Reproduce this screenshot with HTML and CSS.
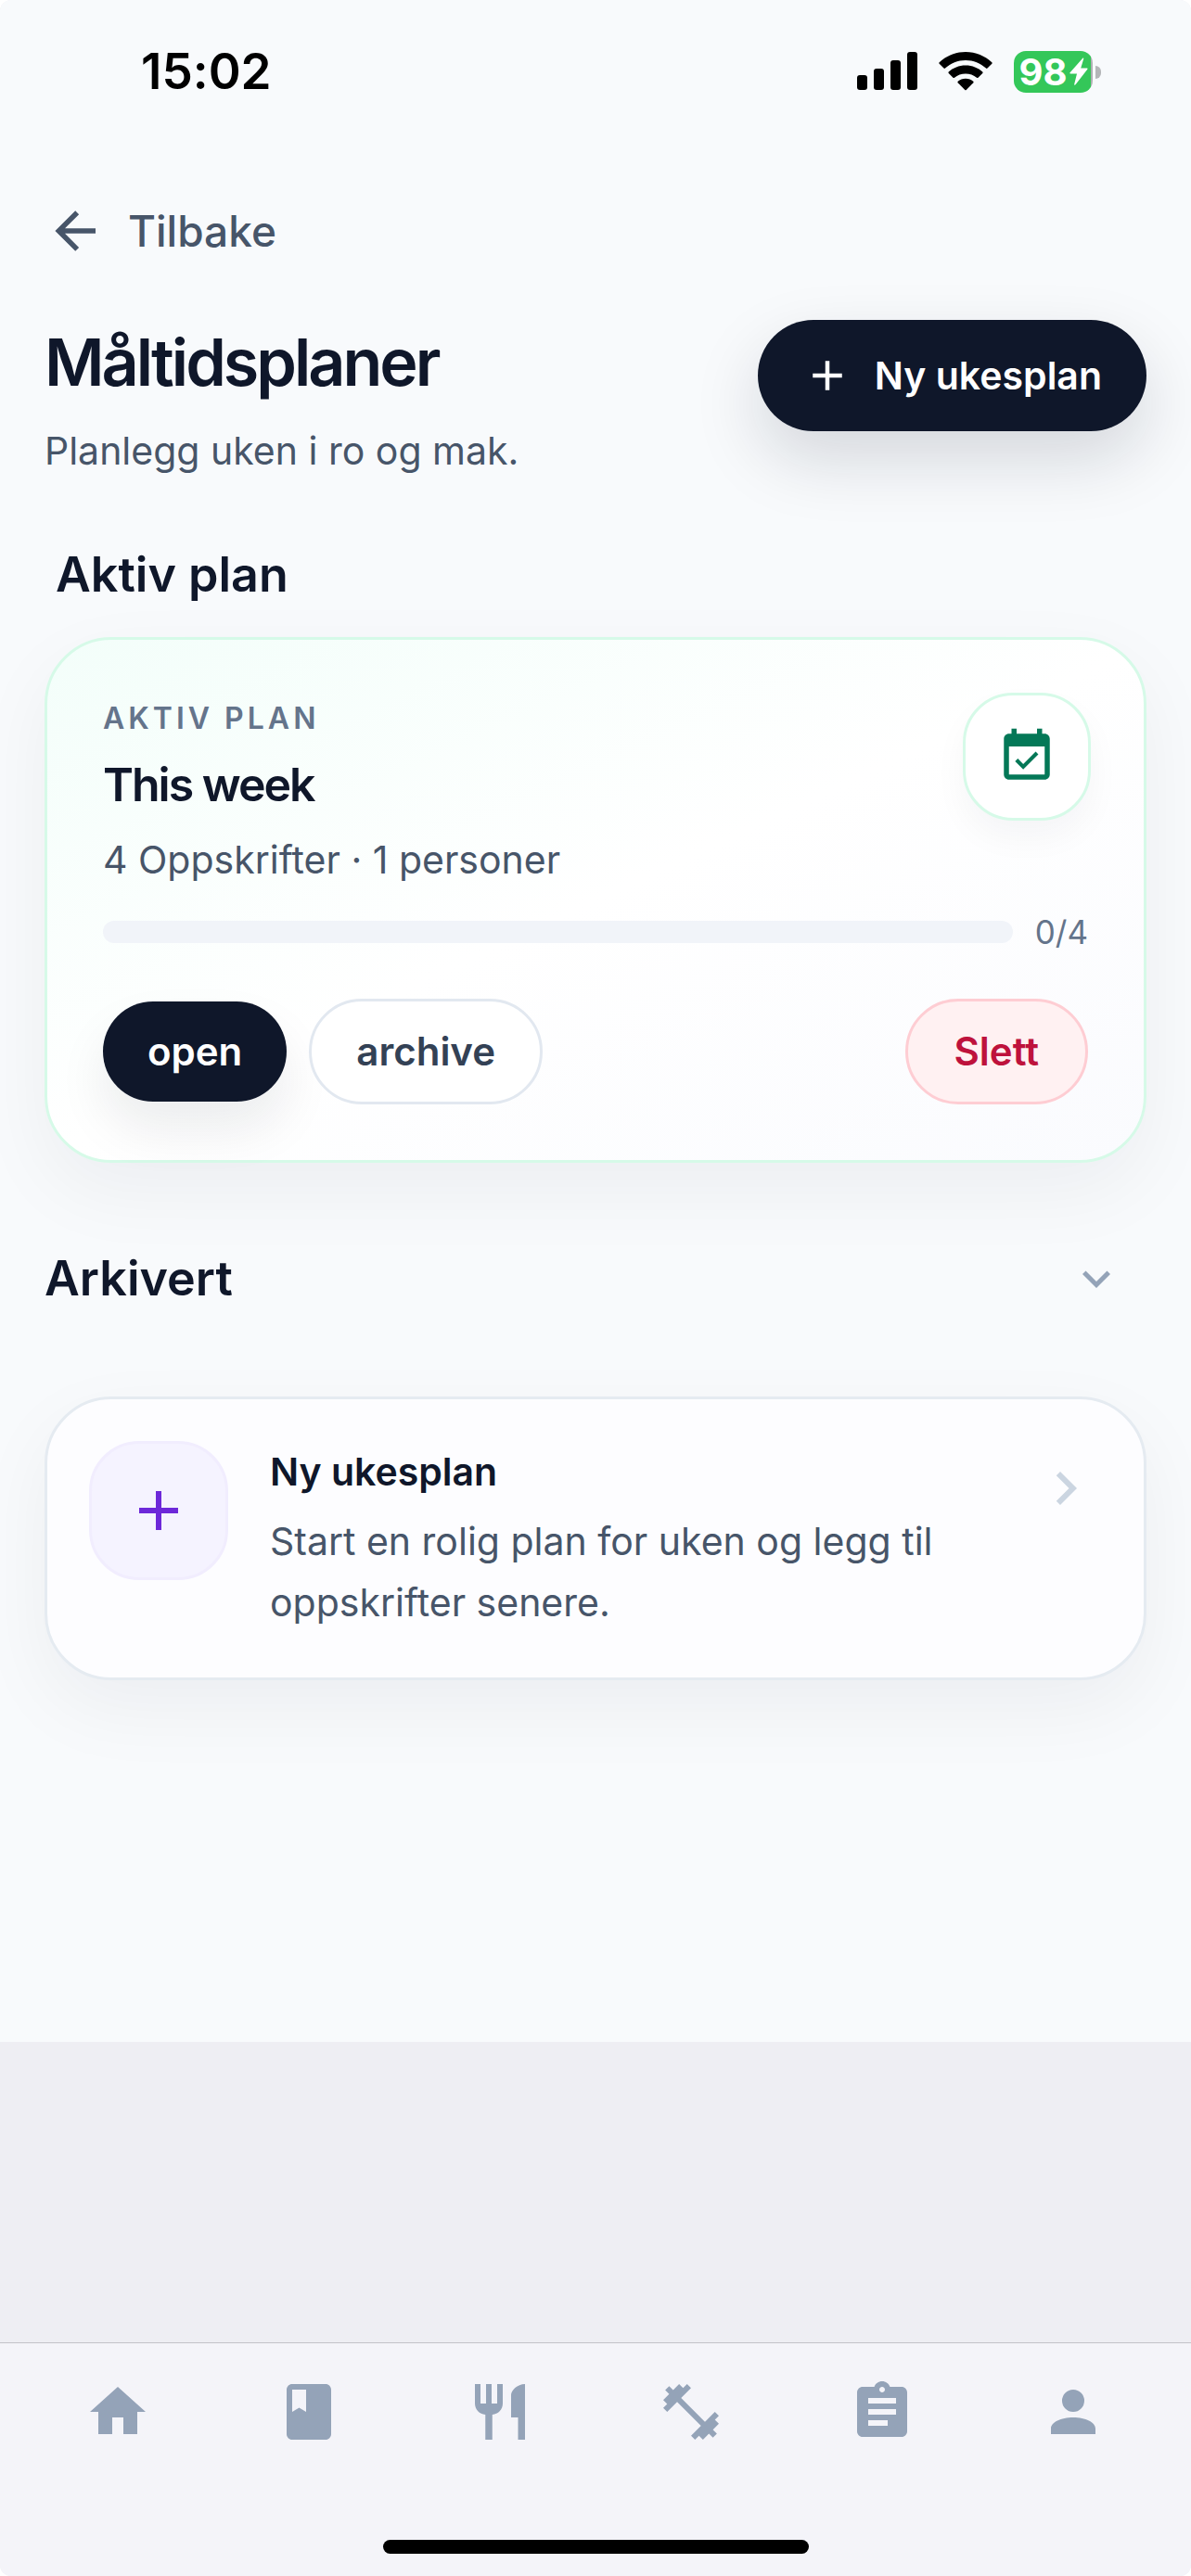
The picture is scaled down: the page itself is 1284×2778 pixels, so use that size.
FILE: index.html
```html
<!DOCTYPE html>
<html lang="nb">
<head>
<meta charset="utf-8">
<meta name="viewport" content="width=device-width, initial-scale=1">
<title>Måltidsplaner</title>
<link rel="stylesheet" href="styles.css">
</head>
<body>
<div class="screen">
  <div class="page">
    <header class="status-bar">
      <span class="status-time">15:02</span>
      <div class="status-icons">
        <svg class="signal" viewBox="0 0 65 42" aria-hidden="true">
          <rect x="0" y="25" width="11" height="16" rx="3"/>
          <rect x="18" y="18" width="11" height="23" rx="3"/>
          <rect x="36" y="9" width="11" height="32" rx="3"/>
          <rect x="54" y="0" width="11" height="41" rx="3"/>
        </svg>
        <svg class="wifi" viewBox="0 0 58 42" aria-hidden="true">
          <path d="M29 0C40 0 50 4.300 57.300 11.300Q58 12 57.300 12.800L52.500 17.600Q51.700 18.300 51 17.600C45 12.200 37.500 9 29 9S13 12.200 7 17.600Q6.300 18.300 5.500 17.600L.7 12.800Q0 12 .7 11.300C8 4.300 18 0 29 0Z"/>
          <path d="M29 14.500C36.200 14.500 42.500 17.200 47.300 21.500Q48 22.200 47.300 23L42.500 27.800Q41.800 28.400 41 27.800C37.700 25 33.500 23.500 29 23.500S20.300 25 17 27.800Q16.200 28.400 15.500 27.800L10.700 23Q10 22.200 10.700 21.500C15.500 17.200 21.800 14.500 29 14.500Z"/>
          <path d="M29 28.700C32.300 28.700 35 29.800 37.300 31.700Q38 32.400 37.300 33.200L29.700 41Q29 41.700 28.300 41L20.700 33.200Q20 32.400 20.700 31.700C23 29.800 25.700 28.700 29 28.700Z"/>
        </svg>
        <div class="battery">
          <span class="battery-level">98</span>
          <svg class="bolt" viewBox="0 0 20 30" aria-hidden="true"><path d="M14.500 .5Q15.500 0 15.200 1.500L12.200 11.500H19Q20 11.700 19.300 12.700L6.500 29.300Q5 30.500 5.200 28.800L8 17.500H1Q0 17.300 .6 16.300Z"/></svg>
        </div>
      </div>
    </header>

    <main class="content">
      <a class="back" href="#">
        <svg class="icon-66" viewBox="0 0 24 24" aria-hidden="true"><path d="M20 11V13H8L13.500 18.500L12.080 19.920L4.160 12L12.080 4.080L13.500 5.500L8 11H20Z"/></svg>
        <span>Tilbake</span>
      </a>

      <div class="page-head">
        <div>
          <h1 class="title">Måltidsplaner</h1>
          <p class="subtitle">Planlegg uken i ro og mak.</p>
        </div>
        <button class="btn btn-new" type="button">
          <svg class="icon-54" viewBox="0 0 24 24" aria-hidden="true"><path d="M19 13H13V19H11V13H5V11H11V5H13V11H19V13Z"/></svg>
          <span>Ny ukesplan</span>
        </button>
      </div>

      <section>
        <h2 class="section-title section-title-inset">Aktiv plan</h2>
        <article class="card plan">
          <div class="plan-head">
            <div>
              <p class="eyebrow">AKTIV PLAN</p>
              <h3 class="plan-name">This week</h3>
              <p class="plan-meta">4 Oppskrifter · 1 personer</p>
            </div>
            <div class="plan-badge">
              <svg class="icon-66" viewBox="0 0 24 24" aria-hidden="true"><path d="M16.530 11.060L15.470 10l-4.880 4.880-2.120-2.120-1.060 1.060L10.590 17l5.940-5.940zM19 3h-1V1h-2v2H8V1H6v2H5c-1.110 0-1.990.9-1.990 2L3 19c0 1.100.89 2 2 2h14c1.100 0 2-.9 2-2V5c0-1.100-.9-2-2-2zm0 16H5V8h14v11z"/></svg>
            </div>
          </div>
          <div class="plan-progress">
            <progress class="bar" value="0" max="4" aria-label="Fremdrift"></progress>
            <span class="count">0/4</span>
          </div>
          <div class="plan-actions">
            <button class="btn btn-dark" type="button">open</button>
            <button class="btn btn-outline" type="button">archive</button>
            <button class="btn btn-danger" type="button">Slett</button>
          </div>
        </article>
      </section>

      <button class="archived" type="button" aria-expanded="false">
        <span class="section-title">Arkivert</span>
        <svg class="icon-60" viewBox="0 0 24 24" aria-hidden="true"><path d="M7.410 8.580L12 13.170L16.590 8.580L18 10L12 16L6 10L7.410 8.580Z"/></svg>
      </button>

      <a class="card new-plan" href="#">
        <span class="new-plan-icon">
          <svg class="icon-72" viewBox="0 0 24 24" aria-hidden="true"><path d="M19 13H13V19H11V13H5V11H11V5H13V11H19V13Z"/></svg>
        </span>
        <span class="new-plan-text">
          <strong class="new-plan-title">Ny ukesplan</strong>
          <span class="new-plan-desc">Start en rolig plan for uken og legg til oppskrifter senere.</span>
        </span>
        <svg class="icon-72 new-plan-chevron" viewBox="0 0 24 24" aria-hidden="true"><path d="M8.590 16.580L13.170 12L8.590 7.410L10 6L16 12L10 18L8.590 16.580Z"/></svg>
      </a>
    </main>
  </div>

  <footer class="tab-bar">
    <nav class="tabs">
      <a class="tab" href="#" aria-label="Hjem"><svg class="icon-72" viewBox="0 0 24 24"><path d="M10 20V14H14V20H19V12H22L12 3L2 12H5V20H10Z"/></svg></a>
      <a class="tab" href="#" aria-label="Oppskrifter"><svg class="icon-72" viewBox="0 0 24 24"><path fill-rule="evenodd" d="M18 2H6C4.900 2 4 2.900 4 4V20C4 21.100 4.900 22 6 22H18C19.100 22 20 21.100 20 20V4C20 2.900 19.100 2 18 2ZM6 4H11V12L8.500 10.500L6 12V4Z"/></svg></a>
      <a class="tab" href="#" aria-label="Måltider"><svg class="icon-72" viewBox="0 0 24 24"><path d="M11 9H9V2H7v7H5V2H3v7c0 2.120 1.660 3.840 3.750 3.970V22h2.500v-9.030C11.340 12.840 13 11.120 13 9V2h-2v7zm5-3v8h2.500v8H21V2c-2.760 0-5 2.240-5 4z"/></svg></a>
      <a class="tab" href="#" aria-label="Trening"><svg class="icon-72" viewBox="0 0 24 24"><path d="M20.570 14.860L22 13.430L20.570 12L17 15.570L8.430 7L12 3.430L10.570 2L9.140 3.430L7.710 2L5.570 4.140L4.140 2.710L2.710 4.140L4.140 5.570L2 7.710L3.430 9.140L2 10.570L3.430 12L7 8.430L15.570 17L12 20.570L13.430 22L14.860 20.570L16.290 22L18.430 19.860L19.860 21.290L21.290 19.860L19.860 18.430L22 16.290L20.570 14.860Z"/></svg></a>
      <a class="tab" href="#" aria-label="Planer"><svg class="icon-72" viewBox="0 0 24 24"><path d="M19 3h-4.180C14.400 1.840 13.300 1 12 1c-1.300 0-2.400.84-2.820 2H5c-1.100 0-2 .9-2 2v14c0 1.100.9 2 2 2h14c1.100 0 2-.9 2-2V5c0-1.100-.9-2-2-2zm-7 0c.55 0 1 .45 1 1s-.45 1-1 1-1-.45-1-1 .45-1 1-1zm2 14H7v-2h7v2zm3-4H7v-2h10v2zm0-4H7V7h10v2z"/></svg></a>
      <a class="tab" href="#" aria-label="Profil"><svg class="icon-72" viewBox="0 0 24 24"><path d="M12 4a4 4 0 1 1 0 8a4 4 0 0 1 0-8zM12 14c4.420 0 8 1.790 8 4v2H4v-2c0-2.210 3.580-4 8-4z"/></svg></a>
    </nav>
    <div class="home-indicator"></div>
  </footer>
</div>
</body>
</html>
```
FILE: styles.css
```css
* {
  box-sizing: border-box;
}

body {
  margin: 0;
  background: #ffffff;
  color: #0f172a;
  font-family: Inter, "Liberation Sans", sans-serif;
  font-size: 41px;
  line-height: 66px;
  font-variant-ligatures: none;
}

h1, h2, h3, p {
  margin: 0;
}

a {
  color: inherit;
  text-decoration: none;
}

button {
  margin: 0;
  font: inherit;
  color: inherit;
  cursor: pointer;
}

svg {
  display: block;
  flex: none;
  fill: currentColor;
}

.icon-54 { width: 54px; height: 54px; }
.icon-60 { width: 60px; height: 60px; }
.icon-66 { width: 66px; height: 66px; }
.icon-72 { width: 72px; height: 72px; }

.screen {
  display: flex;
  flex-direction: column;
  min-height: 100vh;
  overflow: hidden;
  border-radius: 12px;
  background: #eeeef3;
}

.page {
  background: #f8fafc;
}

/* Status bar */
.status-bar {
  display: flex;
  align-items: center;
  justify-content: space-between;
  height: 154px;
  padding: 0 97px 0 152px;
  color: #000000;
}

.status-time {
  font-size: 53px;
  font-weight: 600;
}

.status-icons {
  display: flex;
  align-items: center;
  gap: 23px;
}

.signal { width: 65px; height: 42px; }
.wifi { width: 58px; height: 42px; }

.battery {
  position: relative;
  display: flex;
  align-items: center;
  justify-content: center;
  gap: 2px;
  width: 85px;
  height: 45px;
  margin-right: 9px;
  border-radius: 13px;
  background: linear-gradient(90deg, #34c759 83px, #afb1b3 83px);
  color: #ffffff;
}

.battery::after {
  content: "";
  position: absolute;
  left: 88px;
  top: 16px;
  width: 6px;
  height: 14px;
  border-radius: 0 6px 6px 0;
  background: #b4b6b8;
}

.battery-level {
  font-size: 40px;
  font-weight: 700;
  line-height: 45px;
}

.bolt { width: 20px; height: 30px; }

/* Page content */
.content {
  padding: 62px 48px 390px;
}

.back {
  display: inline-flex;
  align-items: center;
  gap: 24px;
  vertical-align: top;
  color: #475569;
  font-size: 46px;
  font-weight: 500;
}

.page-head {
  display: flex;
  align-items: flex-start;
  justify-content: space-between;
  margin-top: 63px;
}

.title {
  font-size: 70px;
  font-weight: 600;
  line-height: 92px;
  letter-spacing: -3px;
}

.subtitle {
  margin-top: 18px;
  color: #475569;
  line-height: 62px;
}

.btn {
  padding: 21px 48px;
  border: 0;
  border-radius: 60px;
  font-size: 42px;
  font-weight: 600;
}

.btn-new {
  display: flex;
  align-items: center;
  gap: 24px;
  padding: 27px 48px;
  background: #0f172a;
  color: #ffffff;
  font-size: 41px;
  box-shadow: 0 30px 72px rgba(15, 23, 42, 0.15);
}

.section-title {
  font-size: 52px;
  font-weight: 600;
  line-height: 66px;
}

.section-title-inset {
  margin: 70px 0 34px;
  padding: 0 12px;
}

.card {
  border: 3px solid #e5ebf1;
  border-radius: 72px;
  box-shadow: 0 30px 84px rgba(15, 23, 42, 0.05);
}

/* Active plan */
.plan {
  padding: 60px;
  border-color: #d6fae8;
  background: linear-gradient(155deg, #f3fefa 0%, #ffffff 50%, #fafbfe 100%);
}

.plan-head {
  display: flex;
  align-items: flex-start;
  justify-content: space-between;
}

.eyebrow {
  color: #64748b;
  font-size: 32px;
  font-weight: 600;
  line-height: 50px;
  letter-spacing: 4px;
}

.plan-name {
  margin-top: 13px;
  font-size: 50px;
  font-weight: 600;
  line-height: 66px;
  letter-spacing: -2px;
}

.plan-meta {
  margin-top: 18px;
  color: #475569;
  line-height: 60px;
}

.plan-badge {
  display: grid;
  place-items: center;
  width: 138px;
  height: 138px;
  margin: -3px -3px 0 0;
  border: 3px solid #d6fae8;
  border-radius: 54px;
  background: #ffffff;
  color: #047857;
  box-shadow: 0 18px 36px rgba(15, 23, 42, 0.04);
}

.plan-progress {
  display: flex;
  align-items: center;
  gap: 24px;
  margin-top: 24px;
}

.bar {
  flex: 1;
  height: 24px;
  border: 0;
  border-radius: 12px;
  overflow: hidden;
  background: #f1f4f9;
  appearance: none;
}

.bar::-webkit-progress-bar {
  background: #f1f4f9;
}

.bar::-webkit-progress-value {
  background: #047857;
}

.count {
  color: #64748b;
  font-size: 35px;
  line-height: 48px;
}

.plan-actions {
  display: flex;
  align-items: center;
  gap: 24px;
  margin-top: 48px;
}

.btn-dark {
  background: #0f172a;
  color: #ffffff;
  box-shadow: 0 30px 54px rgba(15, 23, 42, 0.08);
}

.btn-outline {
  border: 3px solid #e2e8f0;
  background: #ffffff;
  color: #334155;
}

.btn-danger {
  margin-left: auto;
  padding: 21px 50px;
  border: 3px solid #fecdd3;
  background: #fff1f2;
  color: #be123c;
}

/* Archived plans */
.archived {
  display: flex;
  align-items: center;
  justify-content: space-between;
  width: 100%;
  margin: 92px 0 94px;
  padding: 0 24px 0 0;
  border: 0;
  background: none;
}

.archived svg {
  color: #94a3b8;
}

/* New plan */
.new-plan {
  display: flex;
  align-items: flex-start;
  gap: 45px;
  padding: 45px 48px 48px 45px;
  background: #fdfdff;
}

.new-plan-icon {
  display: grid;
  place-items: center;
  flex: none;
  width: 150px;
  height: 150px;
  border: 3px solid #f1edfe;
  border-radius: 54px;
  background: #f5f3ff;
  color: #6d28d9;
}

.new-plan-text {
  display: flex;
  flex: 1;
  flex-direction: column;
  gap: 9px;
}

.new-plan-title {
  font-weight: 600;
}

.new-plan-desc {
  color: #475569;
}

.new-plan-chevron {
  margin-top: 15px;
  color: #cbd5e1;
}

/* Bottom tabs */
.tab-bar {
  display: flex;
  flex-direction: column;
  align-items: center;
  margin-top: auto;
  padding: 38px 24px 24px;
  border-top: 1px solid #c2c2c8;
  background: #f4f4f9;
}

.tabs {
  display: flex;
  align-self: stretch;
  margin-bottom: 102px;
}

.tab {
  display: flex;
  flex: 1;
  justify-content: center;
  color: #94a3b8;
}

.home-indicator {
  width: 459px;
  height: 15px;
  border-radius: 8px;
  background: #000000;
}
```
